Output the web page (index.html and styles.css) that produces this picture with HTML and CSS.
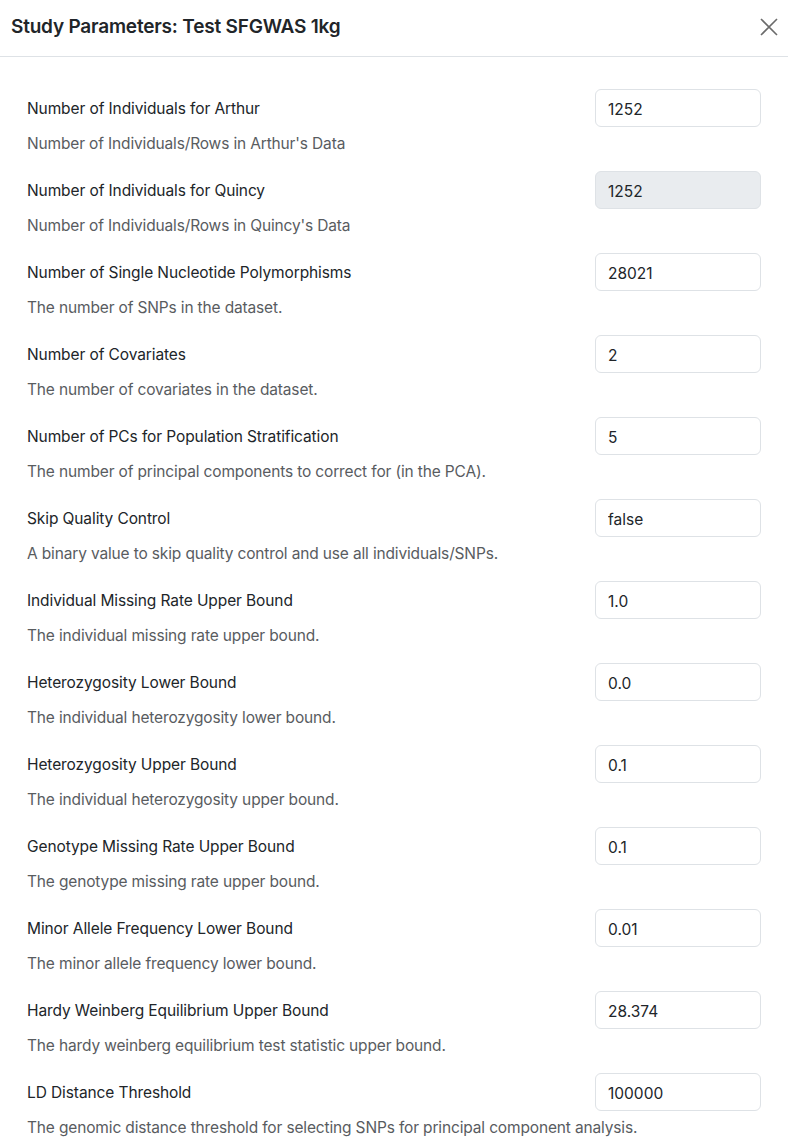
FILE: index.html
```html
<!DOCTYPE html>
<html>
<head>
<meta charset="utf-8">
<link rel="stylesheet" href="styles.css">
</head>
<body>
<div class="modal">
  <div class="modal-header">
    <h5 class="modal-title">Study Parameters: Test SFGWAS 1kg</h5>
    <button class="close" aria-label="Close">
      <svg width="18" height="18" viewBox="0 0 18 18"><path d="M1 1 L17 17 M17 1 L1 17" stroke="#6b6b6b" stroke-width="1.6" fill="none"/></svg>
    </button>
  </div>
  <div class="modal-body">
    <div class="param">
      <div class="row"><label>Number of Individuals for Arthur</label><input class="field" value="1252"></div>
      <div class="desc">Number of Individuals/Rows in Arthur's Data</div>
    </div>
    <div class="param">
      <div class="row"><label>Number of Individuals for Quincy</label><input class="field" value="1252" disabled></div>
      <div class="desc">Number of Individuals/Rows in Quincy's Data</div>
    </div>
    <div class="param">
      <div class="row"><label>Number of Single Nucleotide Polymorphisms</label><input class="field" value="28021"></div>
      <div class="desc">The number of SNPs in the dataset.</div>
    </div>
    <div class="param">
      <div class="row"><label>Number of Covariates</label><input class="field" value="2"></div>
      <div class="desc">The number of covariates in the dataset.</div>
    </div>
    <div class="param">
      <div class="row"><label>Number of PCs for Population Stratification</label><input class="field" value="5"></div>
      <div class="desc">The number of principal components to correct for (in the PCA).</div>
    </div>
    <div class="param">
      <div class="row"><label>Skip Quality Control</label><input class="field" value="false"></div>
      <div class="desc">A binary value to skip quality control and use all individuals/SNPs.</div>
    </div>
    <div class="param">
      <div class="row"><label>Individual Missing Rate Upper Bound</label><input class="field" value="1.0"></div>
      <div class="desc">The individual missing rate upper bound.</div>
    </div>
    <div class="param">
      <div class="row"><label>Heterozygosity Lower Bound</label><input class="field" value="0.0"></div>
      <div class="desc">The individual heterozygosity lower bound.</div>
    </div>
    <div class="param">
      <div class="row"><label>Heterozygosity Upper Bound</label><input class="field" value="0.1"></div>
      <div class="desc">The individual heterozygosity upper bound.</div>
    </div>
    <div class="param">
      <div class="row"><label>Genotype Missing Rate Upper Bound</label><input class="field" value="0.1"></div>
      <div class="desc">The genotype missing rate upper bound.</div>
    </div>
    <div class="param">
      <div class="row"><label>Minor Allele Frequency Lower Bound</label><input class="field" value="0.01"></div>
      <div class="desc">The minor allele frequency lower bound.</div>
    </div>
    <div class="param">
      <div class="row"><label>Hardy Weinberg Equilibrium Upper Bound</label><input class="field" value="28.374"></div>
      <div class="desc">The hardy weinberg equilibrium test statistic upper bound.</div>
    </div>
    <div class="param">
      <div class="row"><label>LD Distance Threshold</label><input class="field" value="100000"></div>
      <div class="desc">The genomic distance threshold for selecting SNPs for principal component analysis.</div>
    </div>
  </div>
</div>
</body>
</html>
```
FILE: styles.css
```css
* { box-sizing: border-box; }
html, body { margin: 0; padding: 0; background: #fff; }
body {
  font-family: Inter, "Liberation Sans", sans-serif;
  color: #212529;
  font-size: 16px;
}
.modal-header {
  display: flex;
  align-items: center;
  justify-content: space-between;
  height: 57px;
  padding: 0 10px 0 11px;
  border-bottom: 1px solid #dee2e6;
}
.modal-title {
  margin: 0;
  font-size: 19px;
  font-weight: 600;
  letter-spacing: -0.2px;
  line-height: 24px;
  padding-bottom: 2px;
}
.close {
  background: none;
  border: 0;
  padding: 0;
  width: 18px;
  height: 18px;
  display: flex;
  margin-bottom: 2px;
}
.modal-body {
  padding: 32px 27px 0 27px;
}
.param { margin-bottom: 15px; }
.row {
  display: flex;
  align-items: center;
  justify-content: space-between;
}
label {
  font-size: 15.5px;
  line-height: 24px;
  letter-spacing: -0.1px;
  padding-top: 2px;
}
.field {
  width: 166px;
  height: 38px;
  border: 1px solid #dee2e6;
  border-radius: 6px;
  padding: 2px 12px 0 12px;
  font-family: Inter, "Liberation Sans", sans-serif;
  font-size: 15.5px;
  color: #212529;
  background: #fff;
}
.field:disabled { background: #e9ecef; color: #212529; opacity: 1; }
.desc {
  margin-top: 5px;
  line-height: 24px;
  font-size: 15.5px;
  letter-spacing: -0.15px;
  color: #595c5f;
}
```
